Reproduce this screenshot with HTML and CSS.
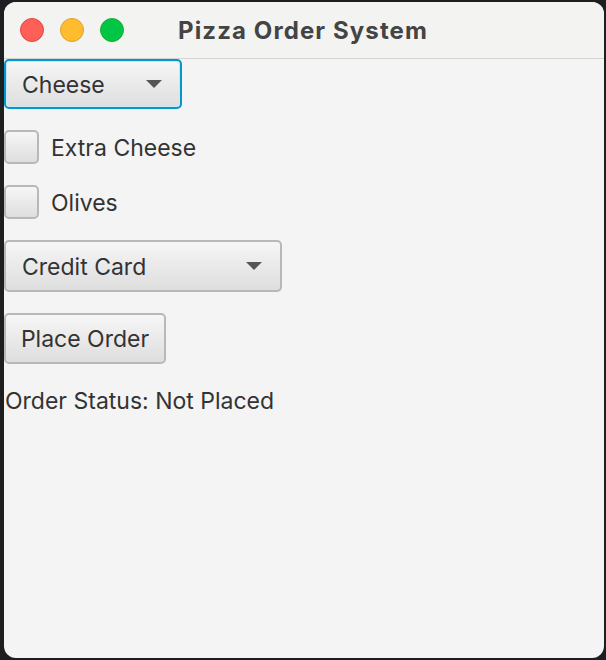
FILE: index.html
```html
<!DOCTYPE html>
<html>
<head>
<meta charset="utf-8">
<link rel="stylesheet" href="styles.css">
</head>
<body>
<div class="window">
  <div class="titlebar">
    <div class="lights">
      <span class="light red"></span>
      <span class="light yellow"></span>
      <span class="light green"></span>
    </div>
    <div class="title">Pizza Order System</div>
  </div>
  <div class="content">
    <div class="combo focused pizza">
      <span class="combo-text">Cheese</span>
      <span class="arrow"></span>
    </div>
    <label class="check">
      <span class="box"></span>
      <span class="check-label">Extra Cheese</span>
    </label>
    <label class="check">
      <span class="box"></span>
      <span class="check-label">Olives</span>
    </label>
    <div class="combo payment">
      <span class="combo-text">Credit Card</span>
      <span class="arrow"></span>
    </div>
    <div class="row">
      <button class="btn">Place Order</button>
    </div>
    <div class="status">Order Status: Not Placed</div>
  </div>
</div>
</body>
</html>
```
FILE: styles.css
```css
html, body {
  margin: 0;
  padding: 0;
  background: #1d1e20;
  width: 606px;
  height: 660px;
  overflow: hidden;
}
body {
  font-family: Inter, "Noto Sans", sans-serif;
  color: #333;
}
.window {
  margin: 2px 0 0 4px;
  width: 600px;
  height: 656px;
  background: #f4f4f4;
  border-radius: 12px;
  overflow: hidden;
  display: flex;
  flex-direction: column;
}
.titlebar {
  position: relative;
  height: 56px;
  border-bottom: 1px solid #d3d3d3;
  background: #f3f3f2;
  display: flex;
  align-items: center;
  justify-content: center;
  flex: none;
}
.lights {
  position: absolute;
  left: 16px;
  top: 16px;
  display: flex;
  gap: 16px;
}
.light {
  width: 24px;
  height: 24px;
  border-radius: 50%;
  box-sizing: border-box;
}
.red { background: #fe5f57; border: 1px solid #e4473f; }
.yellow { background: #febc2e; border: 1px solid #e0a02a; }
.green { background: #00c545; border: 1px solid #1fae30; }
.title {
  font-weight: 700;
  font-size: 24px;
  color: #444;
  letter-spacing: 1.1px;
  margin-left: -2px;
}
.content {
  display: flex;
  flex-direction: column;
  align-items: flex-start;
  gap: 21px;
  padding: 0;
}
.combo {
  box-sizing: border-box;
  height: 50px;
  display: flex;
  align-items: center;
  justify-content: space-between;
  padding: 0 18px 0 16px;
  border: 2px solid #b8b8b8;
  border-radius: 5px;
  background: linear-gradient(#f6f6f6, #dedede);
  font-size: 23px;
  color: #333;
}
.combo-text { padding-top: 2px; }
.combo.focused {
  border-color: #0497cc;
  box-shadow: inset 0 0 0 1px #cce8f3;
}
.pizza { width: 178px; }
.payment { width: 278px; height: 52px; }
.arrow {
  width: 0;
  height: 0;
  border-left: 8px solid transparent;
  border-right: 8px solid transparent;
  border-top: 8px solid #555;
}
.check {
  display: flex;
  align-items: center;
  gap: 12px;
  height: 34px;
}
.box {
  box-sizing: border-box;
  width: 35px;
  height: 34px;
  border: 2px solid #b8b8b8;
  border-radius: 5px;
  background: linear-gradient(#f6f6f6, #dedede);
}
.check-label {
  font-size: 23px;
  color: #333;
  padding-top: 2px;
}
.row { display: flex; }
.btn {
  box-sizing: border-box;
  width: 162px;
  height: 51px;
  border: 2px solid #b8b8b8;
  border-radius: 5px;
  background: linear-gradient(#f6f6f6, #dedede);
  font-family: Inter, "Noto Sans", sans-serif;
  font-size: 23px;
  color: #333;
  padding: 0;
}
.status {
  font-size: 23px;
  color: #333;
  margin-top: 2px;
  padding-left: 1px;
}
```
